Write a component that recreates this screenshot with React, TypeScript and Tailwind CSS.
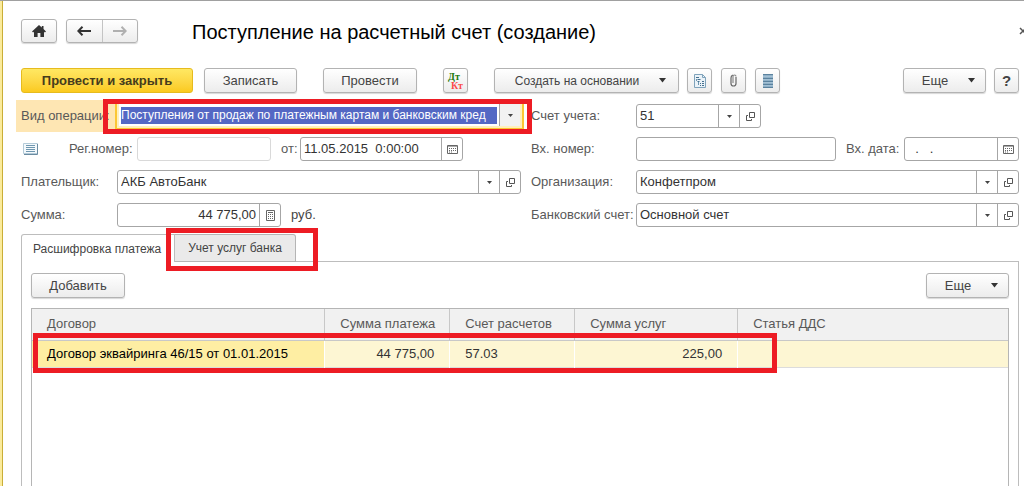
import React from "react";

const cx = (...parts: (string | false | undefined)[]) => parts.filter(Boolean).join(" ");

const btnBase =
  "flex shrink-0 items-center justify-center rounded-[3px] border border-[#b3b3b3] bg-linear-to-b from-white to-[#ececec] text-[#444] shadow-[0_1px_1px_#d8d8d8]";

function Caret({ small = false }: { small?: boolean }) {
  return small ? (
    <svg width="5" height="3" viewBox="0 0 5 3" aria-hidden="true">
      <path d="M0 0h5L2.5 3z" fill="#444" />
    </svg>
  ) : (
    <svg width="7" height="5" viewBox="0 0 7 5" aria-hidden="true">
      <path d="M0 0h7L3.5 4.6z" fill="#333" />
    </svg>
  );
}

function OpenIcon() {
  return (
    <svg width="9" height="9" viewBox="0 0 9 9" fill="none" stroke="#555" aria-hidden="true">
      <path d="M3.5.5h5v5h-5z" />
      <path d="M2 3.500H.5v5h5V7" />
    </svg>
  );
}

function CalendarIcon() {
  return (
    <svg width="11" height="9" viewBox="0 0 11 9" fill="none" stroke="#666" aria-hidden="true">
      <path d="M.5.5h10v8H.5z" />
      <path d="M1 1.500h9" stroke="#aaa" />
      <path d="M2 3.500h7M2 5.500h7M2 7h4" strokeDasharray="1 1" />
    </svg>
  );
}

function CalculatorIcon() {
  return (
    <svg width="9" height="11" viewBox="0 0 9 11" fill="none" stroke="#666" aria-hidden="true">
      <path d="M.5.5h8v10h-8z" />
      <path d="M2 2.500h5" />
      <path d="M2 4.500h5M2 6.500h5M2 8.500h5" strokeDasharray="1 1" />
    </svg>
  );
}

type Tool = "list" | "open" | "calendar" | "calculator";

const toolNames: Record<Tool, string> = {
  list: "Выбрать из списка",
  open: "Открыть",
  calendar: "Календарь",
  calculator: "Калькулятор",
};

function ToolIcon({ tool }: { tool: Tool }) {
  if (tool === "list") return <Caret small />;
  if (tool === "open") return <OpenIcon />;
  if (tool === "calendar") return <CalendarIcon />;
  return <CalculatorIcon />;
}

function Field({
  id,
  value = "",
  tools = [],
  className = "",
  right = false,
  disabled = false,
}: {
  id: string;
  value?: string;
  tools?: Tool[];
  className?: string;
  right?: boolean;
  disabled?: boolean;
}) {
  return (
    <div
      className={cx(
        "flex h-6 min-w-0 rounded-[3px] border bg-white",
        disabled ? "border-[#d9d9d9]" : "border-[#a6a6a6]",
        className,
      )}
    >
      <input
        id={id}
        defaultValue={value}
        disabled={disabled}
        className={cx(
          "w-full min-w-0 flex-1 bg-transparent px-[3px] text-[#333] outline-none",
          right && "text-right",
        )}
      />
      {tools.map((t) => (
        <button
          key={t}
          type="button"
          aria-label={toolNames[t]}
          className="flex w-[21px] shrink-0 items-center justify-center border-l border-[#a6a6a6]"
        >
          <ToolIcon tool={t} />
        </button>
      ))}
    </div>
  );
}

function Label({ htmlFor, className = "", children }: { htmlFor: string; className?: string; children: React.ReactNode }) {
  return (
    <label htmlFor={htmlFor} className={cx("shrink-0 whitespace-nowrap text-[#595959]", className)}>
      {children}
    </label>
  );
}

function Header() {
  return (
    <header className="flex items-center pt-[17px] pl-[18px]">
      <button type="button" aria-label="Домой" className={cx(btnBase, "h-6 w-9")}>
        <svg width="14" height="12" viewBox="0 0 14 12" aria-hidden="true">
          <path d="M7 0 0 6.400l1.100 1.200L2 6.800V12h3.600V8h2.800v4H12V6.800l.9.8L14 6.400 11.500 4V1H9.800v1.500z" fill="#333" />
        </svg>
      </button>
      <div className={cx(btnBase, "ml-[9px] h-6 w-[72px]")}>
        <button type="button" aria-label="Назад" className="flex h-full flex-1 items-center justify-center border-r border-[#c4c4c4]">
          <svg width="14" height="10" viewBox="0 0 14 10" fill="none" stroke="#333" aria-hidden="true">
            <path d="M14 5H2" strokeWidth="2" />
            <path d="M5.500.8 1.300 5l4.200 4.200" strokeWidth="2" />
          </svg>
        </button>
        <button type="button" aria-label="Вперед" className="flex h-full flex-1 items-center justify-center">
          <svg width="14" height="10" viewBox="0 0 14 10" fill="none" stroke="#b0b0b0" aria-hidden="true">
            <path d="M0 5h12" strokeWidth="2" />
            <path d="M8.500.8 12.700 5 8.500 9.200" strokeWidth="2" />
          </svg>
        </button>
      </div>
      <h1 className="ml-[54px] pt-0.5 text-[20px] leading-6 whitespace-nowrap text-black">
        Поступление на расчетный счет (создание)
      </h1>
      <button type="button" aria-label="Закрыть" className="ml-auto w-[5px] overflow-hidden">
        <svg width="8" height="8" viewBox="0 0 8 8" fill="none" stroke="#555" strokeWidth="1.500" aria-hidden="true">
          <path d="m1 1 6 6M7 1 1 7" />
        </svg>
      </button>
    </header>
  );
}

function Toolbar() {
  return (
    <div className="flex items-center pt-6 pr-[5px] pl-[18px]">
      <button
        type="button"
        className="h-[25px] w-[172px] shrink-0 rounded-[3px] border border-[#e6bb1e] bg-linear-to-b from-[#ffe862] to-[#fbca1c] font-bold text-[#463c1c]"
      >
        Провести и закрыть
      </button>
      <button type="button" className={cx(btnBase, "ml-[11px] h-[25px] w-[93px]")}>
        Записать
      </button>
      <button type="button" className={cx(btnBase, "ml-[26px] h-[25px] w-[94px]")}>
        Провести
      </button>
      <button
        type="button"
        aria-label="Показать проводки"
        className={cx(btnBase, "ml-[26px] h-[25px] w-[25px] flex-col font-['Liberation_Serif',serif] text-[10px] leading-[9px] font-bold")}
      >
        <span className="self-start pl-1 text-[#1d7a0c]">Дт</span>
        <span className="self-end pr-1 text-[#fb4a4a]">Кт</span>
      </button>
      <button type="button" className={cx(btnBase, "ml-[26px] h-[25px] w-[185px] gap-5 pl-2 text-xs")}>
        Создать на основании
        <Caret />
      </button>
      <div className="ml-2 flex gap-[9px]">
        <button type="button" aria-label="Структура документа" className={cx(btnBase, "h-[25px] w-[25px]")}>
          <svg width="12" height="14" viewBox="0 0 12 14" fill="none" aria-hidden="true">
            <path d="M.5.5h8l3 3v10H.5z" fill="#eaf2f8" stroke="#7fa3bb" />
            <path d="M8.500.5v3h3" stroke="#7fa3bb" />
            <path d="M2 3.500h3M3.500 5.500h3M3.500 7.500h2M6 9.500h1M6 11.500h1M8 7.500h2M8 9.500h2M8 11.500h2" stroke="#44708f" />
            <path d="M2.500 5v2M4.500 8v3" stroke="#6c95b0" />
          </svg>
        </button>
        <button type="button" aria-label="Присоединенные файлы" className={cx(btnBase, "h-[25px] w-[25px]")}>
          <svg width="7" height="13" viewBox="0 0 7 13" fill="none" stroke="#666" aria-hidden="true">
            <path d="M6 3v6.500a2.500 2.500 0 0 1-5 0V4a3 3 0 0 1 2-3" strokeWidth="1.200" />
            <path d="M3 9V2.500a1.500 1.500 0 0 1 3 0" stroke="#8a8a8a" strokeWidth="1.200" />
          </svg>
        </button>
        <button type="button" aria-label="Журнал" className={cx(btnBase, "h-[25px] w-[25px]")}>
          <svg width="10" height="14" viewBox="0 0 10 14" aria-hidden="true">
            <path d="M0 0h10v14H0z" fill="#8fb0c7" />
            <path d="M0 .5h10M0 4.500h10M0 7.500h10M0 10.500h10M0 13.500h10" stroke="#5b829e" />
            <path d="M0 2.500h10M0 5.500h10M0 8.500h10M0 11.500h10" stroke="#a3c0d4" />
          </svg>
        </button>
      </div>
      <button type="button" className={cx(btnBase, "ml-auto h-[25px] w-[83px] gap-5 pl-2")}>
        Еще
        <Caret />
      </button>
      <button type="button" aria-label="Справка" className={cx(btnBase, "ml-2 h-[25px] w-[25px] text-[15px] font-bold")}>
        ?
      </button>
    </div>
  );
}

function DocumentForm() {
  return (
    <div className="mt-[7px] grid grid-cols-[508fr_495fr] pr-[5px] pl-[13px]">
      <div className="flex min-w-0 flex-col gap-px">
        <div className="relative flex h-8 bg-[#fee6b3] pl-[5px]">
          <Label htmlFor="kind" className="w-[94px] self-center">
            Вид операции:
          </Label>
          <div className="flex h-[30px] min-w-0 flex-1 border-x-2 border-b-2 border-[#fbc734] bg-[#fff0bd] px-0.5 pt-1 pb-0.5">
            <div className="flex min-w-0 flex-1 items-center bg-white pl-0.5">
              <input
                id="kind"
                defaultValue="Поступления от продаж по платежным картам и банковским кред"
                className="h-[17px] min-w-0 flex-1 bg-[#5468c4] text-xs text-white outline-none"
              />
              <button
                type="button"
                aria-label="Выбрать вид операции"
                className="ml-0.5 flex w-[21px] shrink-0 items-center justify-center self-stretch border-l border-[#a6a6a6] bg-[#f2f2f2]"
              >
                <Caret small />
              </button>
            </div>
          </div>
          <div className="pointer-events-none absolute -top-px -right-2 -bottom-0.5 left-[87px] border-5 border-[#ed1c24]" />
        </div>
        <div className="flex h-8 items-center pl-[5px]">
          <svg width="16" height="12" viewBox="0 0 16 12" fill="none" className="ml-0.5 shrink-0" aria-hidden="true">
            <path d="M.5.5h14v10H.5z" fill="#f4f9fc" stroke="#b4cbd9" />
            <path d="M3 2.500h9M3 4.500h9M3 6.500h9M3 8.500h9" stroke="#6f97b0" />
            <path d="M14.500 1v10.500H1" stroke="#6b8ca2" />
          </svg>
          <Label htmlFor="regno" className="ml-[30px] w-[68px]">
            Рег.номер:
          </Label>
          <Field id="regno" disabled className="w-[134px]" />
          <Label htmlFor="date" className="ml-2.5 w-[19px]">
            от:
          </Label>
          <Field id="date" value="11.05.2015  0:00:00" tools={["calendar"]} className="w-[163px]" />
        </div>
        <div className="flex h-8 items-center pr-[3px] pl-[5px]">
          <Label htmlFor="payer" className="w-24">
            Плательщик:
          </Label>
          <Field id="payer" value="АКБ АвтоБанк" tools={["list", "open"]} className="flex-1" />
        </div>
        <div className="flex h-8 items-center pl-[5px]">
          <Label htmlFor="sum" className="w-24">
            Сумма:
          </Label>
          <Field id="sum" value="44 775,00" tools={["calculator"]} right className="w-[164px]" />
          <span className="ml-2.5 text-[#444]">руб.</span>
        </div>
      </div>
      <div className="flex min-w-0 flex-col gap-px pl-[7px]">
        <div className="flex h-8 items-center">
          <Label htmlFor="account" className="w-[105px]">
            Счет учета:
          </Label>
          <Field id="account" value="51" tools={["list", "open"]} className="w-[125px]" />
        </div>
        <div className="flex h-8 items-center">
          <Label htmlFor="inno" className="w-[105px]">
            Вх. номер:
          </Label>
          <Field id="inno" className="flex-1" />
          <Label htmlFor="indate" className="ml-2.5 w-[58px]">
            Вх. дата:
          </Label>
          <Field id="indate" value="  .   ." tools={["calendar"]} className="w-[115px]" />
        </div>
        <div className="flex h-8 items-center">
          <Label htmlFor="org" className="w-[105px]">
            Организация:
          </Label>
          <Field id="org" value="Конфетпром" tools={["list", "open"]} className="flex-1" />
        </div>
        <div className="flex h-8 items-center">
          <Label htmlFor="bank" className="w-[105px]">
            Банковский счет:
          </Label>
          <Field id="bank" value="Основной счет" tools={["list", "open"]} className="flex-1" />
        </div>
      </div>
    </div>
  );
}

const columns = [
  { title: "Договор", width: "w-[30%]" },
  { title: "Сумма платежа", width: "w-[12.8%]" },
  { title: "Счет расчетов", width: "w-[12.8%]" },
  { title: "Сумма услуг", width: "w-[16.7%]" },
  { title: "Статья ДДС", width: "w-[27.7%]" },
];

function Details() {
  return (
    <section className="mt-[3px] flex flex-1 flex-col pr-[5px] pl-[18px]">
      <div role="tablist" className="relative z-10 -mb-px flex h-7 text-xs">
        <button
          type="button"
          role="tab"
          aria-selected="true"
          className="w-[154px] rounded-tl-[3px] border border-b-0 border-[#bdbdbd] bg-white pl-[11px] text-left whitespace-nowrap text-[#444]"
        >
          Расшифровка платежа
        </button>
        <div className="relative">
          <button
            type="button"
            role="tab"
            aria-selected="false"
            className="h-7 w-[121px] rounded-tr-[3px] border border-l-0 border-[#b5b5b5] bg-[#eaeaea] text-[#444]"
          >
            Учет услуг банка
          </button>
          <div className="pointer-events-none absolute -top-1.5 -right-[22px] -bottom-[9px] -left-[9px] border-5 border-[#ed1c24]" />
        </div>
      </div>
      <div role="tabpanel" className="flex flex-1 flex-col border border-b-0 border-[#bdbdbd] px-[9px] pt-[11px]">
        <div className="flex justify-between">
          <button type="button" className={cx(btnBase, "h-[25px] w-[94px]")}>
            Добавить
          </button>
          <button type="button" className={cx(btnBase, "h-[25px] w-[83px] gap-5 pl-2")}>
            Еще
            <Caret />
          </button>
        </div>
        <div className="relative mt-2.5 flex-1 border border-b-0 border-[#b5b5b5]">
          <table className="w-full table-fixed border-collapse">
            <thead>
              <tr className="h-[31px] border-b border-[#c8c8c8] bg-[#f1f1f1]">
                {columns.map((c) => (
                  <th
                    key={c.title}
                    className={cx(c.width, "border-r border-[#c8c8c8] px-[15px] text-left font-normal whitespace-nowrap text-[#595959] last:border-r-0")}
                  >
                    {c.title}
                  </th>
                ))}
              </tr>
            </thead>
            <tbody>
              <tr className="h-[27px] border-b border-[#dcdcdc] bg-[#fdf6d3] text-[#333]">
                <td className="border-r border-white bg-[#feeea3] px-[15px] whitespace-nowrap text-black">
                  Договор эквайринга 46/15 от 01.01.2015
                </td>
                <td className="border-r border-white px-[15px] text-right">44 775,00</td>
                <td className="border-r border-white px-[15px]">57.03</td>
                <td className="border-r border-white px-[15px] text-right">225,00</td>
                <td />
              </tr>
            </tbody>
          </table>
          <div className="pointer-events-none absolute top-6 left-px h-10 w-[76.200%] border-5 border-[#ed1c24]" />
        </div>
      </div>
    </section>
  );
}

export default function App() {
  return (
    <div className="flex min-h-screen overflow-hidden border-t border-[#a0a0a0] bg-white font-['Liberation_Sans',Arial,sans-serif] text-[13px] leading-4">
      <div className="w-[3px] shrink-0 border-r border-[#c9ae37] bg-[#fbeb9c]" />
      <main className="flex min-w-0 flex-1 flex-col">
        <Header />
        <Toolbar />
        <DocumentForm />
        <Details />
      </main>
    </div>
  );
}
